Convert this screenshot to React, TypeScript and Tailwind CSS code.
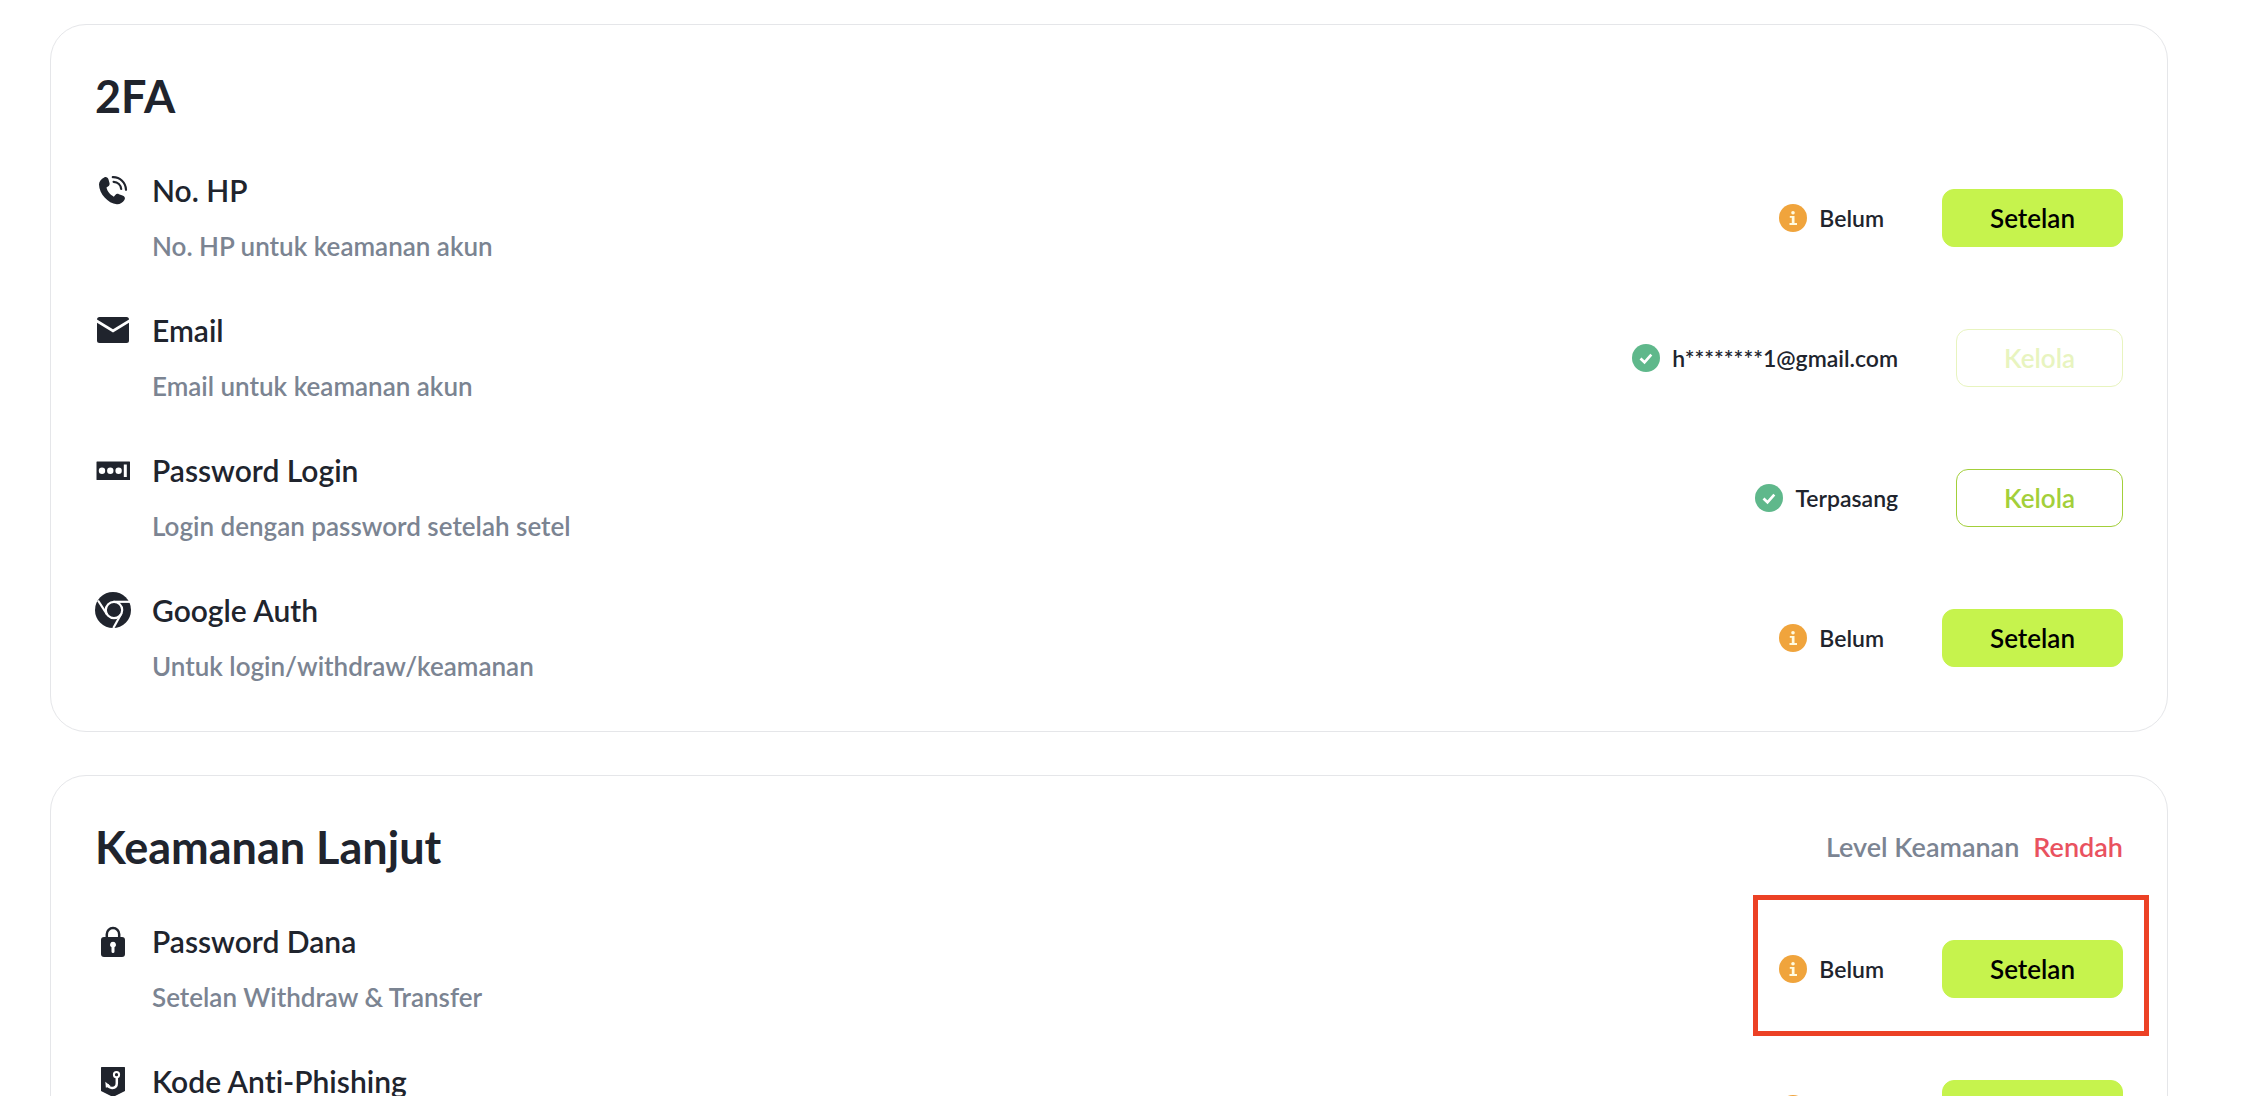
import React from 'react';

type Status = 'unset' | 'done';
type Action = 'Setelan' | 'Kelola';

interface SecurityRowProps {
    icon: React.ReactNode;
    title: string;
    description?: string;
    status: Status;
    statusText: string;
    action: Action;
    disabled?: boolean;
    highlighted?: boolean;
}

const PhoneIcon = () => (
    <svg viewBox="0 0 36 36" className="w-9 h-9" fill="currentColor" aria-hidden="true">
        <path d="M9.2 5.4c1.800-1 3.800.1 4.400 2.300l.9 3.300c.4 1.600-.2 2.700-1.600 3.600l-1.400 1c.6 3.500 3.800 7.400 7.300 9.100l1.500-1.700c1-1.200 2.200-1.400 3.600-.8l3.600 1.400c2.400 1 3.100 2.600 1.900 4.400-1.700 2.600-4.500 4.400-7.600 4.200C13 31.500 4.200 21.800 4 12.500c-.1-3.100 2.200-5.600 5.200-7.100z" />
        <g fill="none" stroke="currentColor" strokeWidth="2.200" strokeLinecap="round">
            <path d="M17.800 5.200c7.200-.2 13 5.400 13.200 12.600" />
            <path d="M18.600 9.800c4.200.2 7.200 3.100 7.600 7.200" />
        </g>
    </svg>
);

const MailIcon = () => (
    <svg viewBox="0 0 36 36" className="w-9 h-9" fill="currentColor" aria-hidden="true">
        <path d="M4.500 5h27a2.500 2.500 0 0 1 2.500 2.500L18 17.200 2 7.500A2.500 2.500 0 0 1 4.500 5z" />
        <path d="M2 10.700 18 20.500l16-9.800v17.800a2.500 2.500 0 0 1-2.500 2.500h-27A2.500 2.500 0 0 1 2 28.500z" />
    </svg>
);

const PasswordIcon = () => (
    <svg viewBox="0 0 36 36" className="w-9 h-9" aria-hidden="true">
        <rect x="1.500" y="9.500" width="33.500" height="18.500" rx="0.500" fill="currentColor" />
        <g fill="#fff">
            <circle cx="7" cy="18.700" r="3.200" />
            <circle cx="15.300" cy="18.700" r="3.200" />
            <circle cx="23.600" cy="18.700" r="3.200" />
            <rect x="28.800" y="12.500" width="3" height="12.500" />
        </g>
    </svg>
);

const ChromeIcon = () => (
    <svg viewBox="0 0 36 36" className="w-9 h-9" aria-hidden="true">
        <circle cx="18" cy="18" r="18" fill="currentColor" />
        <g fill="none" stroke="#fff" strokeWidth="2.200">
            <circle cx="19" cy="18" r="8.200" />
            <path d="M18.500 9.800H35" />
            <path d="M12.200 22.600 3 8.500" />
            <path d="M26 22.200 18.300 36" />
        </g>
    </svg>
);

const LockIcon = () => (
    <svg viewBox="0 0 36 36" className="w-9 h-9" aria-hidden="true">
        <path d="M11.800 15v-3.700a6.200 6.200 0 0 1 12.400 0V15" fill="none" stroke="currentColor" strokeWidth="2.500" />
        <rect x="6" y="14" width="24" height="20" rx="3" fill="currentColor" />
        <path d="M18 18.700a3 3 0 0 1 1.500 5.600v4.200a1.500 1.500 0 0 1-3 0v-4.200a3 3 0 0 1 1.500-5.600z" fill="#fff" />
    </svg>
);

const HookIcon = () => (
    <svg viewBox="0 0 36 36" className="w-9 h-9" aria-hidden="true">
        <path d="M6.500 4h23a.5.5 0 0 1 .5.5V28l-12 6-12-6V4.500a.5.5 0 0 1 .5-.5z" fill="currentColor" />
        <g fill="none" stroke="#fff" strokeLinejoin="round">
            <circle cx="21.500" cy="11.700" r="2.600" strokeWidth="2" />
            <path d="M21.800 14.500v5.700c0 6-8.600 6.200-9.400 1" strokeWidth="2.500" />
        </g>
        <path d="M10.300 18.800l5.200 4.200-4.600 1.800z" fill="#fff" />
    </svg>
);

const StatusIcon: React.FC<{ status: Status }> = ({ status }) =>
    status === 'done' ? (
        <svg viewBox="0 0 28 28" className="w-7 h-7" aria-hidden="true">
            <circle cx="14" cy="14" r="14" fill="#5fb88b" />
            <path d="M8.500 14.500l4 3.800 6.800-7.600" fill="none" stroke="#fff" strokeWidth="2.700" />
        </svg>
    ) : (
        <svg viewBox="0 0 28 28" className="w-7 h-7" aria-hidden="true">
            <circle cx="14" cy="14" r="14" fill="#f0a43c" />
            <g fill="#fffbe0">
                <circle cx="14" cy="8.800" r="1.800" />
                <path d="M10.800 12h4.700v7H18v2h-7.500v-2h2.300v-5.200h-2z" />
            </g>
        </svg>
    );

const buttonStyles: Record<Action, string> = {
    Setelan: 'border-[#c6f34d] bg-[#c6f34d] text-black hover:bg-[#b9e83c]',
    Kelola: 'border-[#a3cf3a] bg-white text-[#a3cf3a] disabled:border-[#e8f4bf] disabled:text-[#e8f4bf]',
};

const SecurityRow: React.FC<SecurityRowProps> = ({
    icon,
    title,
    description,
    status,
    statusText,
    action,
    disabled,
    highlighted,
}) => (
    <li className="flex items-center justify-between min-h-23">
        <div className="flex items-start gap-[21px] min-h-23">
            {icon}
            <div>
                <h3 className="text-[30px] leading-9 font-semibold">{title}</h3>
                {description && (
                    <p className="mt-5 text-[26px] leading-9 font-semibold text-[#7b8492]">{description}</p>
                )}
            </div>
        </div>
        <div className="relative flex items-center gap-[58px]">
            <div className="flex items-center gap-3">
                <StatusIcon status={status} />
                <span className="text-[23px] leading-7 font-semibold">{statusText}</span>
            </div>
            <button
                type="button"
                disabled={disabled}
                className={`h-[58px] px-[47px] rounded-xl border text-[26px] leading-8 font-semibold ${buttonStyles[action]}`}
            >
                {action}
            </button>
            {highlighted && (
                <span className="absolute -inset-x-[26px] -top-[45px] -bottom-[38px] border-5 border-[#ec4125] pointer-events-none" />
            )}
        </div>
    </li>
);

interface CardProps {
    title: string;
    extra?: React.ReactNode;
    children: React.ReactNode;
}

const Card: React.FC<CardProps> = ({ title, extra, children }) => (
    <section className="px-11 pt-[43px] pb-[47px] rounded-[36px] border border-[#e5e6e9]">
        <header className="flex items-center justify-between mb-12">
            <h2 className="text-[45px] leading-14 font-bold">{title}</h2>
            {extra}
        </header>
        <ul className="flex flex-col gap-12">{children}</ul>
    </section>
);

export default function App() {
    return (
        <main className="h-screen overflow-hidden bg-white pt-6 pl-[50px] pr-[90px] font-['Lato',sans-serif] text-[#20242d] [font-variant-ligatures:none]">
            <div className="flex flex-col gap-[43px]">
                <Card title="2FA">
                    <SecurityRow
                        icon={<PhoneIcon />}
                        title="No. HP"
                        description="No. HP untuk keamanan akun"
                        status="unset"
                        statusText="Belum"
                        action="Setelan"
                    />
                    <SecurityRow
                        icon={<MailIcon />}
                        title="Email"
                        description="Email untuk keamanan akun"
                        status="done"
                        statusText="h********1@gmail.com"
                        action="Kelola"
                        disabled
                    />
                    <SecurityRow
                        icon={<PasswordIcon />}
                        title="Password Login"
                        description="Login dengan password setelah setel"
                        status="done"
                        statusText="Terpasang"
                        action="Kelola"
                    />
                    <SecurityRow
                        icon={<ChromeIcon />}
                        title="Google Auth"
                        description="Untuk login/withdraw/keamanan"
                        status="unset"
                        statusText="Belum"
                        action="Setelan"
                    />
                </Card>

                <Card
                    title="Keamanan Lanjut"
                    extra={
                        <p className="flex gap-[14px] text-[27px] leading-9 font-semibold text-[#7b8492]">
                            Level Keamanan
                            <span className="text-[#e9525f]">Rendah</span>
                        </p>
                    }
                >
                    <SecurityRow
                        icon={<LockIcon />}
                        title="Password Dana"
                        description="Setelan Withdraw & Transfer"
                        status="unset"
                        statusText="Belum"
                        action="Setelan"
                        highlighted
                    />
                    <SecurityRow
                        icon={<HookIcon />}
                        title="Kode Anti-Phishing"
                        status="unset"
                        statusText="Belum"
                        action="Setelan"
                    />
                </Card>
            </div>
        </main>
    );
}
